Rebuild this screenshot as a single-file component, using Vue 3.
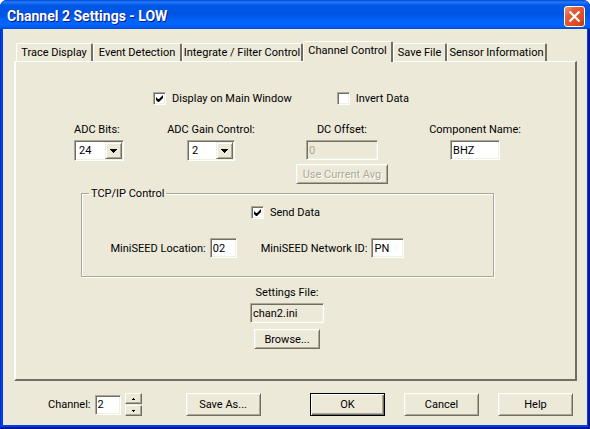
<script setup>
import { ref } from 'vue'

const tabs = [
  { name: 'Trace Display', size: 'w-77' },
  { name: 'Event Detection', size: 'w-89' },
  { name: 'Integrate / Filter Control', size: 'w-121' },
  { name: 'Channel Control', size: 'w-90' },
  { name: 'Save File', size: 'w-54' },
  { name: 'Sensor Information', size: 'w-100' },
]
const active = ref('Channel Control')
const showMain = ref(true)
const invert = ref(false)
const sendData = ref(true)
const bits = ref('24')
const gain = ref('2')
const offset = ref('0')
const component = ref('BHZ')
const place = ref('02')
const network = ref('PN')
const channel = ref(2)
</script>

<template>
  <main class="window">
    <header class="titlebar">
      <h1>Channel 2 Settings - LOW</h1>
      <button class="close" type="button" aria-label="Close">
        <svg width="21" height="21" viewBox="0 0 21 21">
          <defs>
            <linearGradient id="closeFill" x1="0" y1="0" x2="1" y2="1">
              <stop offset="0" stop-color="#f0a088" />
              <stop offset="0.3" stop-color="#e4603c" />
              <stop offset="0.75" stop-color="#dc4820" />
              <stop offset="1" stop-color="#b83410" />
            </linearGradient>
          </defs>
          <rect x="0.5" y="0.5" width="20" height="20" rx="2.5" fill="url(#closeFill)" stroke="#fff" />
          <path d="M5.5 5.5L15.5 15.5M15.5 5.5L5.5 15.5" stroke="#fff" stroke-width="2.2" />
        </svg>
      </button>
    </header>

    <form class="body" @submit.prevent>
      <div class="tabs" role="tablist">
        <button
          v-for="tab in tabs"
          :key="tab.name"
          type="button"
          role="tab"
          class="tab"
          :class="[tab.size, { active: tab.name === active }]"
          :aria-selected="tab.name === active"
          @click="active = tab.name"
        >{{ tab.name }}</button>
      </div>

      <section class="panel">
        <div class="checks">
          <label class="check"><input v-model="showMain" type="checkbox" />Display on Main Window</label>
          <label class="check"><input v-model="invert" type="checkbox" />Invert Data</label>
        </div>

        <div class="fields">
          <div class="field bits">
            <label for="bits">ADC Bits:</label>
            <span class="combo">
              <select id="bits" v-model="bits"><option>16</option><option>24</option></select>
              <span class="drop"><svg width="7" height="4" viewBox="0 0 7 4"><path d="M0 0H7V1H6V2H5V3H4V4H3V3H2V2H1V1H0Z" /></svg></span>
            </span>
          </div>
          <div class="field">
            <label for="gain">ADC Gain Control:</label>
            <span class="combo">
              <select id="gain" v-model="gain"><option>1</option><option>2</option><option>4</option></select>
              <span class="drop"><svg width="7" height="4" viewBox="0 0 7 4"><path d="M0 0H7V1H6V2H5V3H4V4H3V3H2V2H1V1H0Z" /></svg></span>
            </span>
          </div>
          <div class="field">
            <label for="offset">DC Offset:</label>
            <input id="offset" v-model="offset" class="text w-72" type="text" disabled />
            <button class="push average" type="button" disabled>Use Current Avg</button>
          </div>
          <div class="field">
            <label for="component">Component Name:</label>
            <input id="component" v-model="component" class="text w-50" type="text" />
          </div>
        </div>

        <fieldset class="group">
          <legend>TCP/IP Control</legend>
          <label class="check"><input v-model="sendData" type="checkbox" />Send Data</label>
          <div class="seed">
            <label for="place">MiniSEED Location:</label>
            <input id="place" v-model="place" class="text w-27" type="text" />
            <label class="second" for="network">MiniSEED Network ID:</label>
            <input id="network" v-model="network" class="text w-33" type="text" />
          </div>
        </fieldset>

        <div class="file">
          <label for="file">Settings File:</label>
          <input id="file" class="text readonly w-74" type="text" value="chan2.ini" readonly />
          <button class="push browse" type="button">Browse...</button>
        </div>
      </section>

      <footer class="footer">
        <label for="channel">Channel:</label>
        <input id="channel" v-model="channel" class="text w-26" type="text" />
        <div class="spin">
          <button type="button" aria-label="Next channel" @click="channel++">
            <svg width="3" height="2" viewBox="0 0 3 2"><path d="M1 0H2V1H3V2H0V1H1Z" /></svg>
          </button>
          <button type="button" aria-label="Previous channel" @click="channel--">
            <svg width="3" height="2" viewBox="0 0 3 2"><path d="M0 0H3V1H2V2H1V1H0Z" /></svg>
          </button>
        </div>
        <button class="push action save" type="button">Save As...</button>
        <div class="actions">
          <button class="push action ok" type="submit">OK</button>
          <button class="push action" type="button">Cancel</button>
          <button class="push action" type="button">Help</button>
        </div>
      </footer>
    </form>
  </main>
</template>

<style>
body {
  background: #fff;
}
</style>

<style scoped>
* {
  box-sizing: border-box;
}

.window {
  display: flex;
  flex-direction: column;
  min-height: 100vh;
  padding: 0 3px 4px;
  border-radius: 7px 7px 0 0;
  overflow: hidden;
  background: #0340e0;
  box-shadow: inset -1px -1px 0 #00138c, inset 1px 0 0 #0831d9, inset -2px -2px 0 #001ea0;
  color: #000;
  font: 11px/13px Roboto, "Liberation Sans", Arial, sans-serif;
}

.titlebar {
  display: flex;
  align-items: center;
  justify-content: space-between;
  height: 29px;
  margin: 0 -3px;
  padding: 3px 5px 0 7px;
  background: linear-gradient(#0048c8 0, #0a5cf0 1px, #2a7cf8 2px, #0058e6 5px, #0054e3 14px, #0062f8 20px, #0066ff 25px, #005cf0 27px, #0048d0 29px);
}

h1 {
  margin: 0;
  color: #fff;
  font: bold 14px/16px Roboto, "Noto Sans", sans-serif;
  text-shadow: 1px 1px 0 #0a1883;
}

button,
input,
select {
  margin: 0;
  color: #000;
  font: inherit;
}

button {
  padding: 0;
}

.close {
  width: 21px;
  height: 21px;
  border: 0;
  background: none;
}

.close svg {
  display: block;
}

.body {
  flex: 1;
  padding: 12px 10px 9px 11px;
  background: #ece9d8;
}

.tabs {
  display: flex;
  align-items: flex-end;
  padding-left: 2px;
}

.tab {
  height: 18px;
  border: solid;
  border-width: 1px 2px 0 1px;
  border-color: #fff #716f64 #fff #fff;
  border-radius: 2px 2px 0 0;
  background: #ece9d8;
  white-space: nowrap;
}

.tab.active {
  position: relative;
  height: 21px;
  margin-bottom: -1px;
  padding-bottom: 3px;
}

.w-77 { width: 77px; }
.w-89 { width: 89px; }
.w-121 { width: 121px; }
.w-90 { width: 90px; }
.w-54 { width: 54px; }
.w-100 { width: 100px; }

.panel {
  padding: 30px 57px 30px 58px;
  border: solid;
  border-width: 1px 2px 2px 2px;
  border-color: #fff #716f64 #716f64 #fff;
}

.checks {
  display: flex;
  justify-content: center;
  gap: 45px;
  padding-right: 30px;
}

.check {
  display: flex;
  align-items: center;
  gap: 6px;
  white-space: nowrap;
}

.check input {
  appearance: none;
  width: 13px;
  height: 13px;
  border: 1px solid;
  border-color: #aca899 #fff #fff #aca899;
  background: #fff;
  box-shadow: inset 1px 1px 0 #716f64, inset -1px -1px 0 #f1efe2;
}

.check input:checked {
  background: #fff url("data:image/svg+xml,%3Csvg xmlns='http://www.w3.org/2000/svg' width='7' height='7'%3E%3Cpath d='M0 2v3l2 2h1l4-4V0L3 4H2z'/%3E%3C/svg%3E") 2px 2px no-repeat;
}

.fields {
  display: flex;
  justify-content: space-between;
  margin: 18px -3px 0 0;
}

.field {
  display: flex;
  flex-direction: column;
  align-items: center;
  min-width: 86px;
  gap: 4px;
}

.field label {
  white-space: nowrap;
}

.field.bits {
  align-items: flex-start;
  min-width: 52px;
}

.combo {
  position: relative;
  display: flex;
  width: 48px;
}

.bits .combo {
  width: 50px;
}

select {
  appearance: none;
  width: 100%;
  height: 21px;
  padding: 0 18px 0 4px;
  border: 1px solid;
  border-color: #aca899 #fff #fff #aca899;
  border-radius: 0;
  background: #fff;
  box-shadow: inset 1px 1px 0 #716f64, inset -1px -1px 0 #f1efe2;
}

.drop {
  position: absolute;
  inset: 2px 2px 2px auto;
  display: grid;
  place-items: center;
  width: 17px;
  border: 1px solid;
  border-color: #f1efe2 #716f64 #716f64 #f1efe2;
  background: #ece9d8;
  box-shadow: inset 1px 1px 0 #fff, inset -1px -1px 0 #aca899;
  pointer-events: none;
}

.text {
  height: 20px;
  padding: 0 2px;
  border: 1px solid;
  border-color: #aca899 #fff #fff #aca899;
  border-radius: 0;
  background: #fff;
  box-shadow: inset 1px 1px 0 #716f64, inset -1px -1px 0 #f1efe2;
}

.text:disabled {
  background: #ece9d8;
  color: #aca899;
}

.text.readonly {
  background: #ece9d8;
}

.w-26 { width: 26px; }
.w-27 { width: 27px; }
.w-33 { width: 33px; }
.w-50 { width: 50px; }
.w-72 { width: 72px; }
.w-74 { width: 74px; }

.push {
  height: 20px;
  border: 1px solid;
  border-color: #fff #716f64 #716f64 #fff;
  background: #ece9d8;
  box-shadow: inset 1px 1px 0 #f1efe2, inset -1px -1px 0 #aca899;
}

.push:disabled {
  color: #aca899;
  text-shadow: 1px 1px 0 #fff;
}

.average {
  width: 92px;
}

.group {
  display: flex;
  flex-direction: column;
  align-items: center;
  margin: 3px 24px 0 7px;
  padding: 6px 4px 18px 0;
  border: 1px solid #aca899;
  box-shadow: 1px 1px 0 #fff, inset 1px 1px 0 #fff;
}

.group legend {
  margin-left: 7px;
  padding: 0 2px;
}

.seed {
  display: flex;
  align-items: center;
  gap: 4px;
  margin-top: 19px;
  padding-right: 56px;
}

.second {
  margin-left: 20px;
}

.file {
  display: flex;
  flex-direction: column;
  align-items: center;
  gap: 4px;
  margin-top: 9px;
  padding-right: 18px;
}

.browse {
  width: 66px;
  margin-top: 2px;
}

.footer {
  display: flex;
  align-items: center;
  gap: 4px;
  padding: 12px 4px 0 34px;
}

.spin {
  display: grid;
  gap: 1px;
}

.spin button {
  display: grid;
  place-items: center;
  width: 17px;
  height: 11px;
  border: 1px solid;
  border-color: #fff #716f64 #716f64 #fff;
  background: #ece9d8;
  box-shadow: inset -1px -1px 0 #aca899;
}

.actions {
  display: flex;
  gap: 19px;
  margin-left: auto;
}

.action {
  width: 75px;
  height: 23px;
}

.save {
  margin-left: 40px;
}

.ok {
  border-color: #000;
  box-shadow: inset 1px 1px 0 #fff, inset -1px -1px 0 #716f64, inset -2px -2px 0 #aca899;
}
</style>
